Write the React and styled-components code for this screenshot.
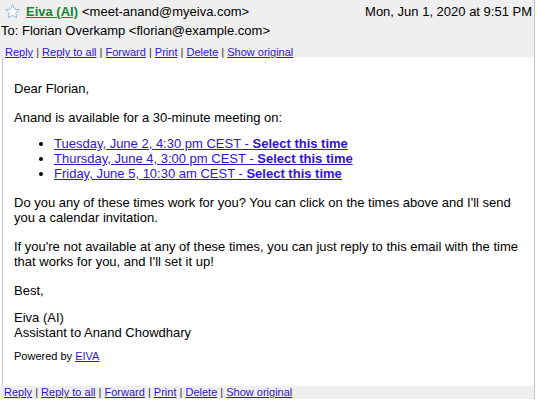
import styled, { createGlobalStyle } from "styled-components";

const GlobalStyle = createGlobalStyle`
  body {
    margin: 0;
    background: #fff;
    font-family: "Liberation Sans", Arial, sans-serif;
    color: #000;
  }
`;

const Frame = styled.div`
  width: 535px;
  border-right: 1px solid #c6c6c6;
  box-sizing: border-box;
`;

const Header = styled.div`
  background: #efefef;
  padding: 0 0 0 1px;
  height: 57px;
  box-sizing: border-box;
  font-size: 13px;
`;

const TopRow = styled.div`
  display: flex;
  justify-content: space-between;
  align-items: center;
  height: 22px;
  padding-right: 2px;
`;

const Sender = styled.div`
  display: flex;
  align-items: center;
  gap: 5px;
  padding-left: 3px;
`;

const SenderName = styled.a`
  color: #17842c;
  font-weight: bold;
  text-decoration: underline;
  margin-right: 4px;
`;

const ToLine = styled.div`
  line-height: 17px;
`;

const Actions = styled.div`
  font-size: 11px;
  line-height: 13px;
  padding: ${(p) => (p.$bottom ? "0 4px" : "7px 4px 0")};
  color: #333;
  background: ${(p) => (p.$bottom ? "#efefef" : "transparent")};
  a {
    color: #3214d2;
    text-decoration: underline;
  }
`;

const Body = styled.div`
  margin-left: 2px;
  border-left: 1px solid #c6c6c6;
  padding: 24px 12px 0 11px;
  height: 329px;
  box-sizing: border-box;
  font-size: 13px;
  line-height: 15px;
`;

const Para = styled.p`
  margin: 0 0 ${(p) => p.$gap ?? 14}px;
`;

const TimeList = styled.ul`
  margin: 0 0 14px;
  padding-left: 40px;
  li a {
    color: #3214d2;
    text-decoration: underline;
  }
  b {
    font-weight: bold;
  }
`;

const Powered = styled.div`
  font-size: 11px;
  line-height: 13px;
  margin-top: 10px;
  a {
    color: #3214d2;
    text-decoration: underline;
  }
`;

const Star = () => (
  <svg width="17" height="17" viewBox="0 0 24 24">
    <path
      d="M12 2.5l2.9 6.2 6.7.7-5 4.6 1.4 6.7L12 17.3l-5.9 3.4 1.4-6.7-5-4.6 6.7-.7z"
      fill="#fff"
      stroke="#8fb4ee"
      strokeWidth="1.4"
      strokeLinejoin="round"
    />
  </svg>
);

const ActionLinks = ({ bottom }) => (
  <Actions $bottom={bottom}>
    <a>Reply</a> | <a>Reply to all</a> | <a>Forward</a> | <a>Print</a> |{" "}
    <a>Delete</a> | <a>Show original</a>
  </Actions>
);

const times = [
  "Tuesday, June 2, 4:30 pm CEST",
  "Thursday, June 4, 3:00 pm CEST",
  "Friday, June 5, 10:30 am CEST",
];

export default function App() {
  return (
    <>
      <GlobalStyle />
      <Frame>
        <Header>
          <TopRow>
            <Sender>
              <Star />
              <span>
                <SenderName>Eiva (AI)</SenderName>&lt;meet-anand@myeiva.com&gt;
              </span>
            </Sender>
            <span>Mon, Jun 1, 2020 at 9:51 PM</span>
          </TopRow>
          <ToLine>To: Florian Overkamp &lt;florian@example.com&gt;</ToLine>
          <ActionLinks />
        </Header>
        <Body>
          <Para>Dear Florian,</Para>
          <Para $gap={11}>Anand is available for a 30-minute meeting on:</Para>
          <TimeList>
            {times.map((t) => (
              <li key={t}>
                <a>
                  {t} - <b>Select this time</b>
                </a>
              </li>
            ))}
          </TimeList>
          <Para>
            Do you any of these times work for you? You can click on the times
            above and I'll send you a calendar invitation.
          </Para>
          <Para>
            If you're not available at any of these times, you can just reply to
            this email with the time that works for you, and I'll set it up!
          </Para>
          <Para $gap={12}>Best,</Para>
          <Para $gap={0}>
            Eiva (AI)
            <br />
            Assistant to Anand Chowdhary
          </Para>
          <Powered>
            Powered by <a>EIVA</a>
          </Powered>
        </Body>
        <ActionLinks bottom />
      </Frame>
    </>
  );
}
